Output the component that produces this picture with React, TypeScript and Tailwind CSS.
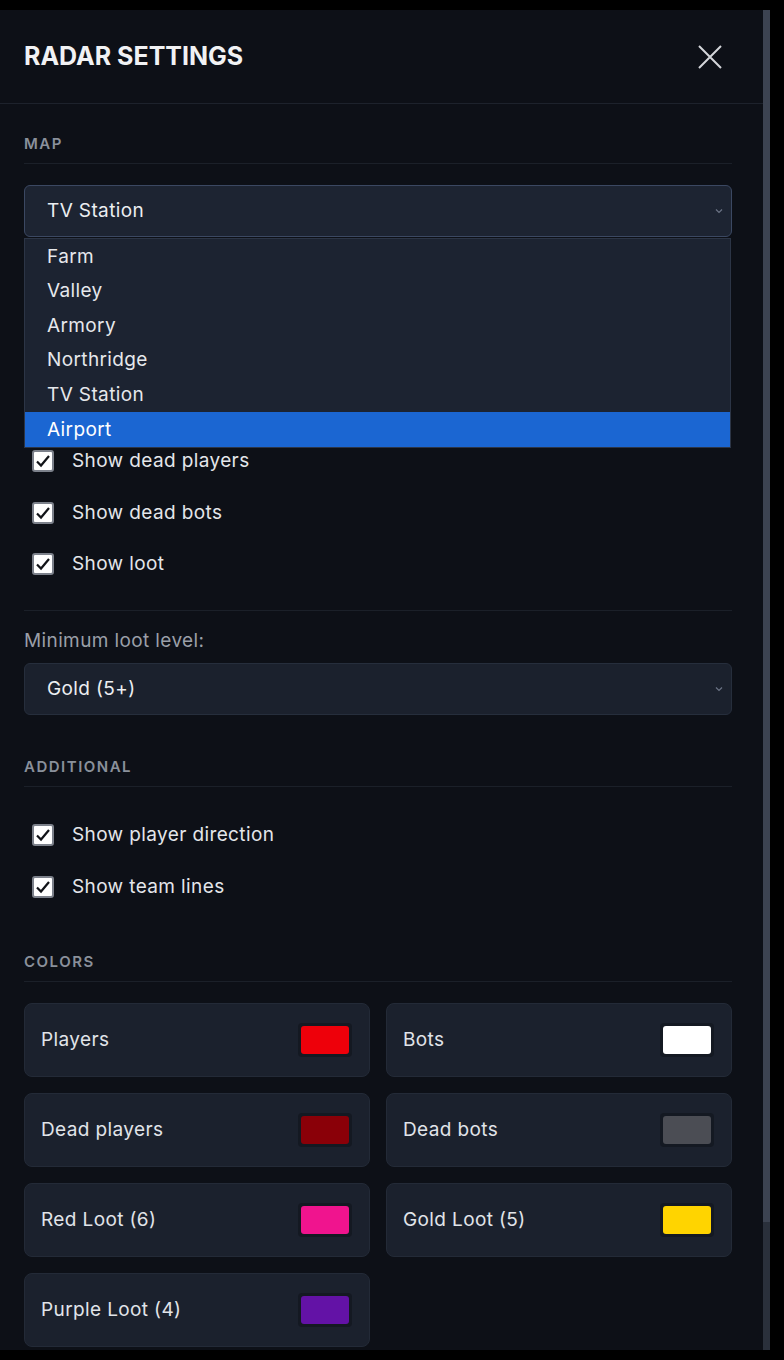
const maps = ["Farm", "Valley", "Armory", "Northridge", "TV Station", "Airport"];

const colors = [
  { label: "Players", color: "bg-[#ee000a]" },
  { label: "Bots", color: "bg-[#ffffff]" },
  { label: "Dead players", color: "bg-[#8a0008]" },
  { label: "Dead bots", color: "bg-[#4b4d54]" },
  { label: "Red Loot (6)", color: "bg-[#f0148e]" },
  { label: "Gold Loot (5)", color: "bg-[#ffd400]" },
  { label: "Purple Loot (4)", color: "bg-[#6312a6]" },
];

function SectionLabel({ children, className = "" }: { children: string; className?: string }) {
  return (
    <div className={`border-b border-[#1b2029] pb-[9px] text-[15px] leading-5 font-semibold tracking-[0.1em] text-[#8a909b] ${className}`}>
      {children}
    </div>
  );
}

function Chevron() {
  return (
    <svg width="8" height="6" viewBox="0 0 8 6" className="text-[#6b7385]">
      <path d="M1 1.5 L4 4.5 L7 1.5" fill="none" stroke="currentColor" strokeWidth="1.2" />
    </svg>
  );
}

function Checkbox({ label, hidden = false }: { label: string; hidden?: boolean }) {
  return (
    <label className={`flex h-[28px] items-center gap-[18px] pl-2 ${hidden ? "invisible" : ""}`}>
      <span className="flex h-[22px] w-[22px] items-center justify-center rounded-[3px] border-2 border-[#7c818b] bg-white">
        <svg width="16" height="14" viewBox="0 0 16 14">
          <path d="M2 7.5 L6 11.5 L14 2" fill="none" stroke="#111318" strokeWidth="2.2" />
        </svg>
      </span>
      <span className="pt-[1px] text-[19px] tracking-[0.02em] text-[#e4e6ea]">{label}</span>
    </label>
  );
}

function ColorCard({ label, color }: { label: string; color: string }) {
  return (
    <div className="flex h-[74px] items-center justify-between rounded-lg border border-[#232a37] bg-[#1b212d] pl-4 pr-[17px]">
      <span className="pt-[1px] text-[19px] tracking-[0.02em] text-[#e1e4e9]">{label}</span>
      <span className="flex h-[34px] w-[54px] items-center justify-center rounded-[4px] bg-[#141922] p-[3px]">
        <span className={`h-full w-full rounded-[3px] ${color}`} />
      </span>
    </div>
  );
}

export default function App() {
  return (
    <div className="h-[1360px] w-[784px] overflow-hidden bg-black pt-[10px] font-['Inter',sans-serif]">
      <div className="flex h-[1340px] w-[770px] overflow-hidden bg-[#0d1017]">
        <div className="w-[763px] flex-none">
          <div className="flex h-[94px] items-center justify-between border-b border-[#1d222c] pl-6 pr-[41px]">
            <h1 className="text-[25px] font-bold text-[#f1f2f4]">RADAR SETTINGS</h1>
            <svg width="24" height="24" viewBox="0 0 24 24">
              <path d="M1 1 L23 23 M23 1 L1 23" stroke="#d4d6da" strokeWidth="2" />
            </svg>
          </div>

          <div className="pl-6 pr-[31px] pt-[30px]">
            <SectionLabel>MAP</SectionLabel>
            <div className="relative mt-[21px]">
              <div className="flex h-[52px] items-center justify-between rounded-md border border-[#3b4862] bg-[#1d2432] pl-[22px] pr-[8px]">
                <span className="pt-[1px] text-[19px] tracking-[0.02em] text-[#eceef1]">TV Station</span>
                <Chevron />
              </div>
              <div className="absolute left-0 right-[1px] top-[53px] z-10 border border-[#2c3546] bg-[#1c2331]">
                {maps.map((m) => (
                  <div
                    key={m}
                    className={`flex h-[34.6px] items-center pl-[22px] pt-[1px] text-[19px] tracking-[0.02em] ${
                      m === "Airport" ? "bg-[#1b66d2] text-white" : "text-[#e6e8ec]"
                    }`}
                  >
                    {m}
                  </div>
                ))}
              </div>
            </div>

            <div className="invisible">
              <SectionLabel className="mt-[42px]">DISPLAY</SectionLabel>
            </div>
            <div className="mt-[35px] flex flex-col gap-[23.5px]">
              <Checkbox label="Show players" hidden />
              <Checkbox label="Show bots" hidden />
              <Checkbox label="Show dead players" />
              <Checkbox label="Show dead bots" />
              <Checkbox label="Show loot" />
            </div>

            <div className="mt-[32px] border-t border-[#1b2029]" />
            <div className="mt-[18px] text-[19px] leading-6 tracking-[0.02em] text-[#9a9fa8]">Minimum loot level:</div>
            <div className="mt-[10px] flex h-[52px] items-center justify-between rounded-md border border-[#262e3c] bg-[#1b212d] pl-[22px] pr-[8px]">
              <span className="pt-[1px] text-[19px] tracking-[0.02em] text-[#eceef1]">Gold (5+)</span>
              <Chevron />
            </div>

            <SectionLabel className="mt-[42px]">ADDITIONAL</SectionLabel>
            <div className="mt-[34px] flex flex-col gap-[24px]">
              <Checkbox label="Show player direction" />
              <Checkbox label="Show team lines" />
            </div>

            <SectionLabel className="mt-[51px]">COLORS</SectionLabel>
            <div className="mt-[21px] grid grid-cols-2 gap-4">
              {colors.map((c) => (
                <ColorCard key={c.label} label={c.label} color={c.color} />
              ))}
            </div>
          </div>
        </div>
        <div className="flex w-[7px] flex-none flex-col">
          <div className="h-[1212px] bg-[#3c4351]" />
          <div className="flex-1 bg-[#2a303b]" />
        </div>
      </div>
    </div>
  );
}
